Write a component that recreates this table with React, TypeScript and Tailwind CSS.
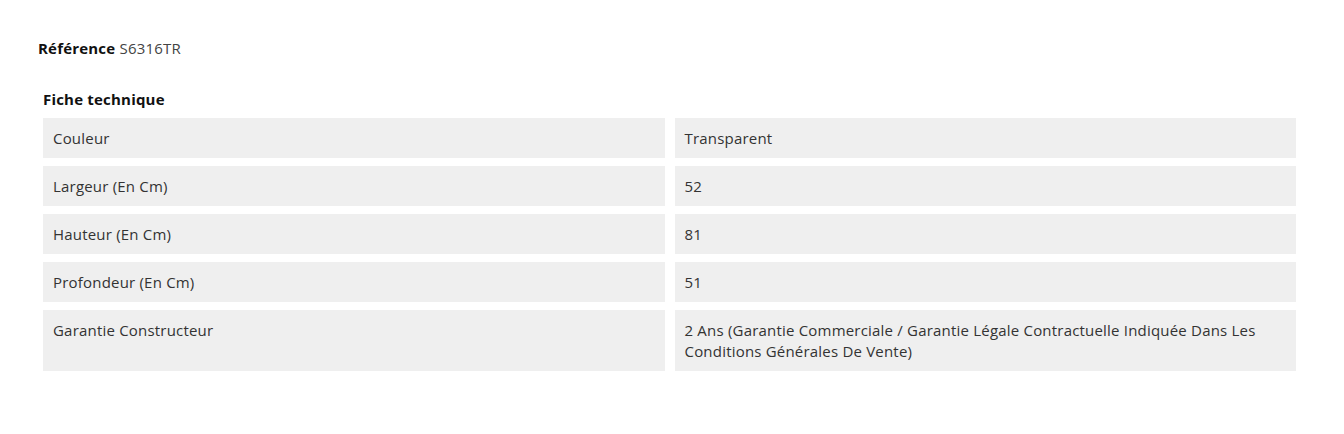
export default function App() {
  const rows: [string, string][] = [
    ["Couleur", "Transparent"],
    ["Largeur (En Cm)", "52"],
    ["Hauteur (En Cm)", "81"],
    ["Profondeur (En Cm)", "51"],
    [
      "Garantie Constructeur",
      "2 Ans (Garantie Commerciale / Garantie Légale Contractuelle Indiquée Dans Les Conditions Générales De Vente)",
    ],
  ];
  return (
    <div
      className="w-[1344px] h-[434px] bg-white text-[#333333] text-[15px] tracking-[0.2px]"
      style={{ fontFamily: '"Open Sans", "Noto Sans", sans-serif' }}
    >
      <div className="pt-[38px] pl-[38px] leading-[21px]">
        <span className="font-bold text-[#111111]">Référence</span>{" "}
        <span className="text-[#444444]">S6316TR</span>
      </div>
      <div className="mt-[30px] pl-[43px] pr-[48px]">
        <div className="font-bold text-[#111111] leading-[21px] mb-[8px]">Fiche technique</div>
        <div className="grid grid-cols-2 gap-x-[10px] gap-y-[8px]">
          {rows.map(([k, v]) => (
            <>
              <div key={k + "k"} className="bg-[#efefef] pl-[10px] pr-[10px] pt-[10px] pb-[9px] leading-[21px]">
                {k}
              </div>
              <div key={k + "v"} className="bg-[#efefef] pl-[10px] pr-[10px] pt-[10px] pb-[9px] leading-[21px]">
                {v}
              </div>
            </>
          ))}
        </div>
      </div>
    </div>
  );
}
